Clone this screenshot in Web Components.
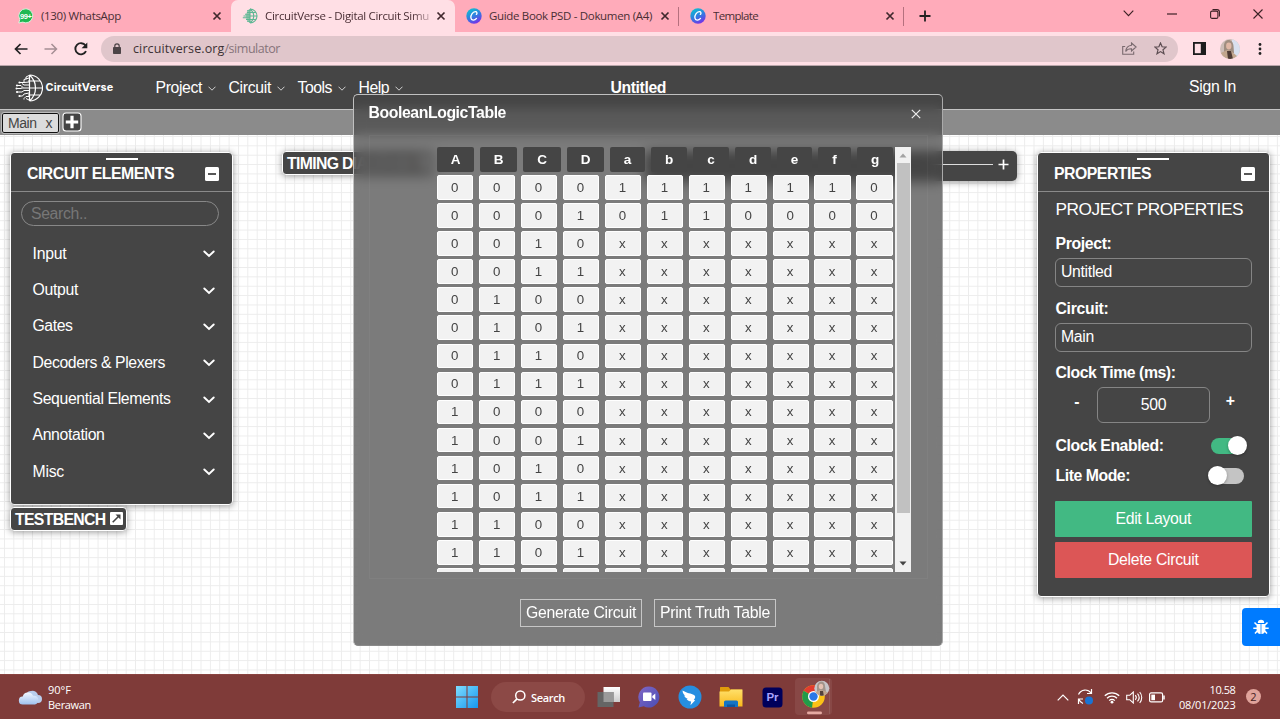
<!DOCTYPE html>
<html lang="en">
<head>
<meta charset="utf-8">
<title>CircuitVerse - Digital Circuit Simulator</title>
<style>
html,body{margin:0;height:719px;overflow:hidden;background:#fff}
body{font-family:"Liberation Sans",Arial,sans-serif;font-size:15.800px;color:#fff}
</style>
</head>
<body>
<cv-app></cv-app>
<script>
const icons = {
  close:[10,10,'<path d="M1.500 1.500l7 7M8.500 1.500l-7 7" stroke="#40282d" stroke-width="1.700"/>'],
  plus:[12,12,'<path d="M6 .5v11M.5 6h11" stroke="#222" stroke-width="1.800"/>'],
  whatsapp:[16,16,'<path d="M8 .8a7 7 0 1 1-3.3 13.3L.8 15l1-3.6A7 7 0 0 1 8 .8z" fill="#21b853" stroke="#e9fff0" stroke-width=".8"/><text x="8" y="10.6" font-size="7.5" font-family="Liberation Sans" font-weight="bold" fill="#fff" text-anchor="middle" textLength="12">99+</text>'],
  canva:[16,16,'<defs><linearGradient id="g" x1="0.2" y1="0" x2=".7" y2="1"><stop offset="0" stop-color="#0cc3cf"/><stop offset=".5" stop-color="#2f80e0"/><stop offset="1" stop-color="#7a2ce8"/></linearGradient></defs><circle cx="8" cy="8" r="7.7" fill="url(#g)"/><path d="M10.3 6.4c1.3-1 .7-2.9-1-2.7C6.600 4 4.500 7 4.900 9.800c.4 3 3.700 3 5.600.6" fill="none" stroke="#fff" stroke-width="1.3" stroke-linecap="round"/>'],
  globe:[16,16,'<g fill="none" stroke="#5db793" stroke-width="1.1"><path d="M8 1a7 7 0 0 1 0 14M8 1c5 4 5 10 0 14M8 1v14M5 4.500h9.300M1.500 8H15M4 11.500h10.300M3 6.200h5M.8 9.800H8M5 13.200h3M5 2.800h3" /></g><path d="M8 1C3.500 2 2 13 8 15z" fill="#5db793" opacity=".6"/>'],
  back:[14,12,'<path d="M13.500 6H1.500M6.500 1L1.500 6l5 5" fill="none" stroke="#222" stroke-width="1.700"/>'],
  fwd:[14,12,'<path d="M.5 6h12M7.500 1l5 5-5 5" fill="none" stroke="#a58f94" stroke-width="1.500"/>'],
  reload:[14,14,'<path d="M12 9.200A5.600 5.600 0 1 1 11.500 3.500" fill="none" stroke="#222" stroke-width="1.900"/><path d="M13.300.5v5.700H7.600z" fill="#222"/>'],
  lock:[8,11,'<rect y="4" width="8" height="7" rx=".8" fill="#4c4447"/><path d="M1.800 4.500V3a2.200 2.200 0 0 1 4.400 0v1.500" fill="none" stroke="#4c4447" stroke-width="1.200"/>'],
  share:[15,13,'<path d="M3.200 4.500H.7v7.800h11V9.500M9.500 1l4.600 4-4.600 4V6.800C6.500 6.700 5 7.500 3.700 9.500 4 6 6 3.600 9.500 3.200z" fill="none" stroke="#796a6f" stroke-width="1.100"/>'],
  star:[13,13,'<path d="M6.500 1l1.600 3.800 4 .3-3.100 2.700 1 4-3.500-2.200L3 11.800l1-4L.9 5.100l4-.3z" fill="none" stroke="#5c4d52" stroke-width="1.200"/>'],
  side:[13,13,'<rect x=".9" y=".9" width="11.200" height="11.200" fill="none" stroke="#1d1d1d" stroke-width="1.800"/><path d="M7.800 1H12v11H7.800z" fill="#1d1d1d"/>'],
  avatar:[20,20,'<defs><clipPath id="c"><circle cx="10" cy="10" r="10"/></clipPath></defs><g clip-path="url(#c)"><path d="M0 0h20v20H0z" fill="#cdbdb7"/><path d="M12 0h8v20h-8z" fill="#d9e0ee"/><path d="M4 14V7C4-1 13-1 13.500 7l.5 7z" fill="#a08e80"/><ellipse cx="8.800" cy="7" rx="2.700" ry="3.400" fill="#e0b8a5"/><path d="M1 14l6-3 4 1 6 5v5H2z" fill="#c2a68d"/><path d="M7 12h4l2 8H8z" fill="#4e3b34"/></g>'],
  dots:[4,12,'<g fill="#222"><circle cx="2" cy="1.500" r="1.400"/><circle cx="2" cy="6" r="1.400"/><circle cx="2" cy="10.500" r="1.400"/></g>'],
  wdown:[11,7,'<path d="M.7.7l4.800 5 4.800-5" fill="none" stroke="#3b2024" stroke-width="1.100"/>'],
  wmin:[10,2,'<path d="M0 1h10" stroke="#2a1518" stroke-width="1.100"/>'],
  wmax:[10,10,'<rect x=".6" y="2.100" width="7.300" height="7.300" rx="1.500" fill="none" stroke="#3b2024" stroke-width="1.100"/><path d="M2.500.6H7a2.400 2.400 0 0 1 2.400 2.400v4.500" fill="none" stroke="#3b2024" stroke-width="1.100"/>'],
  wclose:[10,10,'<path d="M.5.5l9 9M9.500.5l-9 9" stroke="#3b2024" stroke-width="1.100"/>'],
  logo:[28,28,'<g fill="none" stroke="#fff" stroke-width="1.200"><path d="M14.500 1v26M14.500 1a13 13 0 0 1 0 26M14.500 1c8 7 8 19 0 26M13 7h12M6 14h21.500M13 21h12"/><path d="M14 1.500L11 3v2.500M14 4l-5 1.500v3L14 8M5 8.500h4M14 11H9L7 9.500M2.500 11.500H6L8 13.500M1.500 14.500h5M14 16.500H9l-2 1.500H2M14 19l-5 1-1.500 2H4.500M14 22.500h-3L9 24.500v1M14 26l-3-1.500" stroke-width="1"/></g><g fill="#fff"><circle cx="4.500" cy="8.500" r="1.100"/><circle cx="2" cy="11.500" r="1.100"/><circle cx="1.500" cy="14.500" r="1"/><circle cx="2" cy="18" r="1.100"/><circle cx="4.500" cy="22" r="1.100"/></g>'],
  navchev:[8,5,'<path d="M.5.7L4 4.200 7.500.7" fill="none" stroke="#d0d0d0" stroke-width="1"/>'],
  chev:[12,8,'<path d="M1.300 1.500L6 6l4.700-4.500" fill="none" stroke="#fff" stroke-width="1.900" stroke-linecap="round"/>'],
  minus:[14,14,'<rect width="14" height="14" rx="1.500" fill="#fff"/><path d="M3 7h8" stroke="#444" stroke-width="1.800"/>'],
  addtab:[20,20,'<rect x="1" y="1" width="18" height="18" rx="3" fill="#444" stroke="#fff" stroke-width="1.100"/><path d="M10 3.800v12.400M3.800 10h12.400" stroke="#fff" stroke-width="3.200"/>'],
  ext:[13,13,'<rect width="13" height="13" rx="1" fill="#fff"/><path d="M2.700 10.300l6-6" stroke="#444" stroke-width="1.600"/><path d="M5.500 2.600h5v5z" fill="#444"/>'],
  dclose:[10,10,'<path d="M.8.8l8.400 8.400M9.200.8L.8 9.200" stroke="#eee" stroke-width="1.200"/>'],
  up:[8,5,'<path d="M4 .5l3.500 4h-7z" fill="#a3a3a3"/>'],
  down:[8,5,'<path d="M4 4.500L.5.500h7z" fill="#444"/>'],
  bug:[16,16,'<g fill="#fff"><path d="M4.800 4a3.200 3.200 0 0 1 6.400 0z"/><path d="M3.600 5h4v10C5 15 3.600 13 3.600 11zM8.400 5h4v6c0 2-1.400 4-4 4z"/></g><path d="M4 6L1.500 3.500M4 9.300H.3M4.200 12L2 14.500M12 6l2.500-2.500M12 9.300h3.700M11.800 12l2.200 2.500" stroke="#fff" stroke-width="1.500"/>'],
  cloud:[25,18,'<defs><linearGradient id="k" x2="0" y2="1"><stop offset="0" stop-color="#f2f7ff"/><stop offset="1" stop-color="#9fc0ee"/></linearGradient></defs><path d="M10 12a5 5 0 0 1 3-9 5.500 5.500 0 0 1 7 4 3.800 3.800 0 0 1 0 8z" fill="#b9cdec"/><path d="M5 16.500a4 4 0 0 1-.3-8A5.500 5.500 0 0 1 15 7.800a4.400 4.400 0 0 1 2 8.700z" fill="url(#k)"/>'],
  win:[22,22,'<defs><linearGradient id="w" x2="1" y2="1"><stop offset="0" stop-color="#7edcff"/><stop offset="1" stop-color="#1697ee"/></linearGradient></defs><path d="M0 0h10.500v10.500H0zM11.500 0H22v10.500H11.500zM0 11.500h10.500V22H0zM11.500 11.500H22V22H11.500z" fill="url(#w)"/>'],
  search:[14,14,'<circle cx="8.300" cy="5.500" r="4.600" fill="none" stroke="#fff" stroke-width="1.500"/><path d="M5 8.800L.9 13" stroke="#fff" stroke-width="1.700"/>'],
  task:[24,22,'<defs><linearGradient id="t" x2="0" y2="1"><stop offset="0" stop-color="#fff"/><stop offset="1" stop-color="#ccc"/></linearGradient></defs><rect x="6.500" y="1" width="16.500" height="15" fill="url(#t)"/><rect x=".5" y="6" width="16" height="15" fill="#656565"/><path d="M6.500 6h10v10h-10z" fill="#9a9a9a"/>'],
  chat:[22,22,'<defs><linearGradient id="h" x2="1" y2="1"><stop offset="0" stop-color="#8067c5"/><stop offset="1" stop-color="#4a4db5"/></linearGradient></defs><path d="M11 .5A10.500 10.500 0 1 1 5.800 20.200L.5 21.500l1.300-5.200A10.500 10.500 0 0 1 11 .5z" fill="url(#h)"/><rect x="5" y="6.500" width="8.500" height="8.500" rx="1" fill="#fff"/><path d="M14.300 10l3-2.500v6.600l-3-2.500z" fill="#fff"/>'],
  bird:[24,24,'<circle cx="12" cy="12" r="11.500" fill="#268ee0"/><path d="M4.500 5.500c4 2.500 9 3 11.500 4.500 2 1.300 1.300 3-.2 5l1.400.3-4.700 5 .6-3.800c-2-.2-3.500-1-4.500-2.500l1.300-.1c-2-.8-3.300-2-3.800-3.500l1.300.1C5.500 9.500 4.700 8 4.500 5.500z" fill="#fff"/>'],
  folder:[24,22,'<defs><linearGradient id="f" x2="0" y2="1"><stop offset="0" stop-color="#ffe06a"/><stop offset="1" stop-color="#f9b91c"/></linearGradient></defs><path d="M1.500 1h8l2 2.500H23V9H1V1.500z" fill="#e09c0b"/><path d="M.5 5.500H10L12 3.500h11.500V20.500H.5z" fill="url(#f)"/><path d="M5 21v-5a1.500 1.500 0 0 1 1.500-1.500h11A1.500 1.500 0 0 1 19 16v5z" fill="#1474c4"/><path d="M8 21v-2.500h8V21z" fill="#0c56a0"/>'],
  pr:[21,21,'<rect x=".5" y=".5" width="20" height="20" rx="3.500" fill="#00005b"/><text x="10.500" y="14.300" font-family="Liberation Sans" font-size="11.500" font-weight="bold" fill="#a9a4ff" text-anchor="middle">Pr</text>'],
  chrome:[38,38,'<defs><clipPath id="q"><circle cx="26.800" cy="10.300" r="7.500"/></clipPath></defs><rect width="37" height="37" rx="4" fill="#fff" opacity=".07"/><path d="M34.500 1v35" stroke="#fff" opacity=".1"/><circle cx="18.500" cy="18.500" r="11.300" fill="#fbc116"/><path d="M18.500 18.500L8.700 12.800A11.300 11.300 0 0 1 28.300 12.900z" fill="#e33b2e"/><path d="M18.500 18.500L8.700 12.800A11.300 11.300 0 0 0 17 29.700z" fill="#229b4a"/><circle cx="18.500" cy="18.500" r="5.500" fill="#fff"/><circle cx="18.500" cy="18.500" r="4.200" fill="#2a78e8"/><g clip-path="url(#q)"><path d="M19 2h16v17H19z" fill="#c7c5c8"/><path d="M22 14V8c1-6 8-6 8 0l1 6z" fill="#a3948a"/><ellipse cx="26" cy="8.500" rx="2.200" ry="2.800" fill="#e5c2b3"/><path d="M19 15l6-3 5 1 5 3v4H19z" fill="#bfa691"/><path d="M25 13h3l1 6h-4z" fill="#54423b"/></g><rect x="12" y="33.500" width="15" height="2.800" rx="1.400" fill="#e6a9a2"/>'],
  tup:[12,7,'<path d="M.7 6.300L6 1l5.300 5.300" fill="none" stroke="#fff" stroke-width="1.200"/>'],
  sync:[18,18,'<path d="M1.500 6.500C4 .8 11 .8 14 5M14.500 1v4.500H10M6 15.500A7 7 0 0 1 2 11.500M1.500 16v-5H6" fill="none" stroke="#fff" stroke-width="1.200"/><circle cx="12" cy="12.500" r="4" fill="#1a74d4"/>'],
  wifi:[16,13,'<g fill="none" stroke="#fff" stroke-width="1.300"><path d="M.8 4.800a10.200 10.200 0 0 1 14.400 0M3 7.300a7 7 0 0 1 10 0M5.200 9.600a4 4 0 0 1 5.600 0"/></g><circle cx="8" cy="11.200" r="1.400" fill="#fff"/>'],
  vol:[17,13,'<path d="M.7 4.300h3L7.300 1v11L3.700 8.700h-3z" fill="none" stroke="#fff" stroke-width="1.100"/><path d="M9.300 4.200a3.500 3.500 0 0 1 0 4.600M11.500 2.600a6 6 0 0 1 0 7.800M13.700 1a8.500 8.500 0 0 1 0 11" fill="none" stroke="#fff" stroke-width="1.100"/>'],
  bat:[16,11,'<rect x=".6" y=".9" width="13" height="9" rx="1.500" fill="none" stroke="#fff" stroke-width="1.200"/><path d="M2.300 2.600H6v5.600H2.300z" fill="#fff"/><path d="M15 3.500v4" stroke="#fff" stroke-width="1.500"/>']
};

/* Base class: fills an open shadow root from view() when the element is connected. */
class View extends HTMLElement {
  connectedCallback(){
    if(this.shadowRoot) return;
    this.attachShadow({mode:'open'}).innerHTML = '<style>*{box-sizing:border-box}</style>' + this.view();
    this.ready();
  }
  ready(){}
  a(n){return this.getAttribute(n) || ''}
}

customElements.define('cv-icon', class extends View {
  view(){
    const [w,h,body] = icons[this.a('name')];
    return `<style>:host{display:block;flex:none;width:${w}px;height:${h}px}svg{display:block}</style><svg width="${w}" height="${h}" viewBox="0 0 ${w} ${h}">${body}</svg>`;
  }
});

/* Single-line label; spreads its letters to the width given in "w". */
customElements.define('cv-label', class extends View {
  view(){return `<style>:host{display:block;flex:none;white-space:nowrap;width:${this.a('w')}px}span{display:inline-block}</style><span><slot></slot></span>`}
  ready(){
    const s = this.shadowRoot.querySelector('span'), n = this.textContent.length;
    s.style.letterSpacing = ((+this.a('w') - s.getBoundingClientRect().width) / n).toFixed(3) + 'px';
  }
});

customElements.define('browser-tab', class extends View {
  view(){return `<style>:host{display:flex;align-items:center;height:32px;width:var(--w);flex:none;padding:0 9px 0 11px}
    :host([active]){background:#ffdfe5;border-radius:7px 7px 0 0}
    .t{margin-left:7px;flex:1;overflow:hidden}
    :host([active]) .t{-webkit-mask:linear-gradient(90deg,#000 86%,transparent)}
    :host([sep]){background:linear-gradient(#b5707e,#b5707e) right 7px / 1px 19px no-repeat}
  </style><cv-icon name="${this.a('icon')}"></cv-icon><div class="t"><slot></slot></div><cv-icon name="close"></cv-icon>`}
});

customElements.define('browser-chrome', class extends View {
  view(){return `<style>
    :host{display:block;font:11.500px "Open Sans","Noto Sans",sans-serif;color:#4a2e34;background:#ffdfe5}
    .tabs{display:flex;height:32px;background:#ffabba;padding-left:7px}
    .tabs cv-label{margin-top:-1px}
    .ctl{margin-left:auto;display:flex;align-items:center;height:27px;padding-right:17px}
    .bar{display:flex;align-items:center;height:34px;padding:0 18px 0 14px;border-bottom:1px solid #b9a5aa}
    .url{display:flex;align-items:center;margin-left:13px;width:1077px;height:26px;border-radius:13px;background:#e0c6cb;padding:0 11px 0 12px;font-size:12.500px;color:#3d3235}
  </style>
  <div class="tabs">
    <browser-tab icon="whatsapp" style="--w:224px"><cv-label w="80">(130) WhatsApp</cv-label></browser-tab>
    <browser-tab icon="globe" active style="--w:224px"><cv-label w="164">CircuitVerse - Digital Circuit Simu</cv-label></browser-tab>
    <browser-tab icon="canva" sep style="--w:224px"><cv-label w="163">Guide Book PSD - Dokumen (A4)</cv-label></browser-tab>
    <browser-tab icon="canva" sep style="--w:224.500px"><cv-label w="45">Template</cv-label></browser-tab>
    <cv-icon name="plus" style="margin:10px 0 0 15px"></cv-icon>
    <div class="ctl"><cv-icon name="wdown"></cv-icon><cv-icon name="wmin" style="margin-left:33px"></cv-icon><cv-icon name="wmax" style="margin-left:33px"></cv-icon><cv-icon name="wclose" style="margin-left:33px"></cv-icon></div>
  </div>
  <div class="bar">
    <cv-icon name="back"></cv-icon><cv-icon name="fwd" style="margin-left:16px"></cv-icon><cv-icon name="reload" style="margin-left:16px"></cv-icon>
    <div class="url"><cv-icon name="lock"></cv-icon><cv-label w="91.500" style="margin-left:12px">circuitverse.org</cv-label><cv-label w="55.500" style="color:#86747a">/simulator</cv-label>
      <cv-icon name="share" style="margin-left:auto"></cv-icon><cv-icon name="star" style="margin-left:17px"></cv-icon></div>
    <cv-icon name="side" style="margin-left:15px"></cv-icon><cv-icon name="avatar" style="margin-left:14px"></cv-icon><cv-icon name="dots" style="margin-left:18px"></cv-icon>
  </div>`}
});

customElements.define('nav-item', class extends View {
  view(){return `<style>:host{display:flex;align-items:center;gap:5.500px}cv-icon{margin-top:2px}</style><slot></slot><cv-icon name="navchev"></cv-icon>`}
});

customElements.define('cv-navbar', class extends View {
  view(){return `<style>
    :host{display:block}
    nav{display:flex;align-items:center;height:43px;background:#454545;padding:0 44px 0 15px}
    .brand{font:bold 10.800px "Inter","Liberation Sans",sans-serif}
    .tabs{display:flex;align-items:center;height:26px;background:#8b8b8b;border-top:1px solid #c4c4c4;padding-left:2px}
    .tab{display:flex;align-items:center;width:57px;height:20px;background:#dcdcdc;border:1px solid #111;border-radius:2px;padding-left:5px;color:#444;font-size:14px;outline:1px solid #bbb}
  </style>
  <nav><cv-icon name="logo"></cv-icon><cv-label class="brand" w="68" style="margin-left:2.500px">CircuitVerse</cv-label>
    <nav-item style="margin-left:42px"><cv-label w="46.500">Project</cv-label></nav-item>
    <nav-item style="margin-left:13px"><cv-label w="42.500">Circuit</cv-label></nav-item>
    <nav-item style="margin-left:13px"><cv-label w="34.500">Tools</cv-label></nav-item>
    <nav-item style="margin-left:13px"><cv-label w="30.500">Help</cv-label></nav-item>
    <cv-label w="55.500" style="font-weight:bold;margin-left:208px">Untitled</cv-label>
    <cv-label w="47" style="margin-left:auto;margin-top:-2px">Sign In</cv-label></nav>
  <div class="tabs"><div class="tab"><cv-label w="28.500">Main</cv-label><cv-label w="8" style="margin-left:9px">x</cv-label></div><cv-icon name="addtab" style="margin:-1px 0 0 3px"></cv-icon></div>`}
});

customElements.define('cv-panel', class extends View {
  view(){return `<style>
    :host{display:block;box-sizing:border-box;background:#454545;border:1.500px solid #fff;border-radius:4px;box-shadow:0 1px 7px rgba(0,0,0,.42)}
    header{display:flex;flex-direction:column;align-items:center;height:39px;border-bottom:1px solid #8a8a8a;padding-top:5px}
    .grip{width:32px;height:2px;background:#fff}
    .row{display:flex;align-items:center;justify-content:space-between;width:100%;padding:5px 13.500px 0 16px;font-weight:bold}
    cv-icon{margin-top:1px}
  </style><header><div class="grip"></div><div class="row"><cv-label w="${this.a('tw')}">${this.a('heading')}</cv-label><cv-icon name="minus"></cv-icon></div></header><slot></slot>`}
});

customElements.define('circuit-elements', class extends View {
  view(){
    const items = [['Input',34],['Output',45.5],['Gates',40],['Decoders &amp; Plexers',132.5],['Sequential Elements',138],['Annotation',72],['Misc',31.5]];
    return `<style>:host{display:block}
    cv-panel{height:353px}
    .s{display:flex;align-items:center;margin:9px 13px 0 9.500px;height:25px;border:1px solid #888;border-radius:13px;padding:1px 0 0 9.500px;color:#777}
    ul{list-style:none;margin:10.200px 0 0;padding:0 17.500px 0 21.500px}
    li{display:flex;align-items:center;justify-content:space-between;height:36.300px}
    li cv-icon{margin-top:1px}
    </style><cv-panel heading="CIRCUIT ELEMENTS" tw="147"><div class="s"><cv-label w="56">Search..</cv-label></div>
    <ul>${items.map(([t,w])=>`<li><cv-label w="${w}">${t}</cv-label><cv-icon name="chev"></cv-icon></li>`).join('')}</ul></cv-panel>`;
  }
});

customElements.define('cv-chip', class extends View {
  view(){return `<style>:host{display:flex;align-items:center;box-sizing:border-box;background:#454545;border:1.500px solid #fff;border-radius:4px;box-shadow:0 1px 7px rgba(0,0,0,.42);padding:1px 0 0 4px;height:24px;font-weight:bold;gap:4.500px}::slotted(cv-icon){margin-top:-2px}</style><slot></slot>`}
});

customElements.define('cv-toggle', class extends View {
  view(){return `<style>:host{display:flex;align-items:center;width:33px;height:16px;border-radius:8px;background:#c4c4c4}
    i{width:19px;height:19px;flex:none;border-radius:50%;background:#fff;margin-left:-3px;box-shadow:0 1px 3px rgba(0,0,0,.3)}
    :host([on]){background:#42b983}:host([on]) i{margin-left:17px}</style><i></i>`}
});

customElements.define('circuit-properties', class extends View {
  view(){return `<style>:host{display:block}
    cv-panel{height:445px}
    .b{padding:7px 17px 0 17.500px;display:flex;flex-direction:column}
    b{display:block;height:18px;line-height:18px}
    .h{height:20px;line-height:20px;font-size:17.300px}
    .in{height:28.500px;border:1px solid #858585;border-radius:6px;padding:0 0 1px 5px;display:flex;align-items:center;margin-top:5.500px;margin-left:-.5px}
    .clk{display:grid;grid-template-columns:42px 113px 1fr;text-align:center;font-weight:bold;margin:5px 0 0 -.5px;height:36px}
    .clk span{padding-top:6px}
    .clk .n{border:1px solid #858585;border-radius:6px;font-weight:normal;display:flex;align-items:center;justify-content:center}
    .t{display:flex;align-items:center;justify-content:space-between;height:30px}
    .btn{height:35.500px;border-radius:1px;display:flex;align-items:center;justify-content:center;margin-left:-.5px}
    </style><cv-panel heading="PROPERTIES" tw="97"><div class="b">
    <div class="h"><cv-label w="187.500">PROJECT PROPERTIES</cv-label></div>
    <b style="margin-top:16px"><cv-label w="56">Project:</cv-label></b><div class="in"><cv-label w="51">Untitled</cv-label></div>
    <b style="margin-top:13px"><cv-label w="53">Circuit:</cv-label></b><div class="in"><cv-label w="33">Main</cv-label></div>
    <b style="margin-top:12.500px"><cv-label w="120">Clock Time (ms):</cv-label></b>
    <div class="clk"><span style="padding-left:2px">-</span><div class="n"><cv-label w="25.500">500</cv-label></div><span style="padding:5px 1px 0 0">+</span></div>
    <div class="t" style="margin-top:7.500px"><b><cv-label w="108">Clock Enabled:</cv-label></b><cv-toggle on style="margin-right:8px"></cv-toggle></div>
    <div class="t"><b><cv-label w="74.500">Lite Mode:</cv-label></b><cv-toggle style="margin-right:8px"></cv-toggle></div>
    <div class="btn" style="background:#42b983;margin-top:10.500px"><cv-label w="75.500">Edit Layout</cv-label></div>
    <div class="btn" style="background:#dc5656;margin-top:5.500px"><cv-label w="90.500">Delete Circuit</cv-label></div>
    </div></cv-panel>`}
});

customElements.define('truth-table', class extends View {
  view(){
    const outs = ['1111110','0110000'];
    let rows = '';
    for(let i=0;i<15;i++){
      const r = i.toString(2).padStart(4,'0') + (outs[i] || 'xxxxxxx');
      rows += `<div class="r">${[...r].map(c=>`<span>${i<14?c:''}</span>`).join('')}</div>`;
    }
    return `<style>:host{display:flex;width:474px;height:425px;overflow:hidden;font-size:13.300px;color:#444}
    .v{width:458px;overflow:hidden}
    .h{display:grid;grid-template-columns:43px 43px 44px 43px 41px 42px 42px 42px 41px 39px 36px;height:24.500px;color:#fff;font-weight:bold;font-size:13.500px}
    .h span{background:#454545;border-radius:2px;margin-right:6px;display:flex;align-items:center;justify-content:center}
    .h span:last-child{margin-right:0}
    .r{display:grid;grid-template-columns:repeat(11,36.400px);column-gap:5.560px;height:24.500px;margin-top:3.580px}
    .r span{background:#f2f2f2;border:1px solid #fff;border-radius:2px;display:flex;align-items:center;justify-content:center;padding-right:1px}
    .sb{width:16px;background:#f1f1f1;display:flex;flex-direction:column;align-items:center;justify-content:space-between;padding:6px 0}
    .th{width:13px;height:350px;background:#c1c1c1;margin:5px 0 auto}
    </style><div class="v"><div class="h">${[...'ABCDabcdefg'].map(c=>`<span>${c}</span>`).join('')}</div>${rows}</div>
    <div class="sb"><cv-icon name="up"></cv-icon><div class="th"></div><cv-icon name="down"></cv-icon></div>`;
  }
});

customElements.define('logic-dialog', class extends View {
  view(){return `<style>:host{display:flex;flex-direction:column;box-sizing:border-box;width:590px;height:552px;background:rgba(68,68,68,.7);backdrop-filter:blur(6px);border:1px solid #c8c8c8;border-color:#c0c0c0 #aaa #8a8a8a #c0c0c0;border-radius:5px;padding:0 14.500px}
    header{display:flex;align-items:center;justify-content:space-between;height:35px;padding-right:7px;font-weight:bold}
    .c{margin-top:5px;height:444px;padding:11px 0 0 67.500px;border:1px solid rgba(255,255,255,.035)}
    .f{display:flex;gap:12px;justify-content:center;margin-top:20px}
    .f div{width:122px;height:28px;border:1px solid #c6c6c6;display:flex;align-items:center;justify-content:center}
    </style><header><cv-label w="137.500">BooleanLogicTable</cv-label><cv-icon name="dclose" style="margin-top:2px"></cv-icon></header>
    <div class="c"><truth-table></truth-table></div>
    <div class="f"><div><cv-label w="110">Generate Circuit</cv-label></div><div><cv-label w="110">Print Truth Table</cv-label></div></div>`}
});

customElements.define('win-taskbar', class extends View {
  view(){return `<style>:host{display:flex;align-items:center;box-sizing:border-box;height:45px;background:#7f3b39;padding:0 19px 0 18px;font:11px "Open Sans","Noto Sans",sans-serif;color:#fff;border-top:1px solid #8a4441}
    .w{margin-left:5px;line-height:15px}
    .s{display:flex;align-items:center;width:94px;height:30px;border-radius:15px;background:#8c4946;margin-left:13px;padding-left:21px;gap:5px;font-weight:600}
    .r{margin-left:auto;display:flex;align-items:center}
    .d{line-height:15px;display:flex;flex-direction:column;align-items:flex-end;margin-left:14px}
    .n{width:15px;height:15px;border-radius:50%;background:#e0a39b;color:#43201f;text-align:center;line-height:15px;margin:-2px 0 0 10.500px}
    </style><cv-icon name="cloud"></cv-icon><div class="w"><cv-label w="23">90°F</cv-label><cv-label w="43">Berawan</cv-label></div>
    <cv-icon name="win" style="margin-left:365px"></cv-icon><div class="s"><cv-icon name="search"></cv-icon><cv-label w="34">Search</cv-label></div>
    <cv-icon name="task" style="margin-left:12px"></cv-icon><cv-icon name="chat" style="margin-left:17px"></cv-icon><cv-icon name="bird" style="margin-left:18px"></cv-icon><cv-icon name="folder" style="margin-left:17px"></cv-icon><cv-icon name="pr" style="margin-left:19px"></cv-icon><cv-icon name="chrome" style="margin-left:12px"></cv-icon>
    <div class="r"><cv-icon name="tup"></cv-icon><cv-icon name="sync" style="margin-left:8px"></cv-icon><cv-icon name="wifi" style="margin-left:9px"></cv-icon><cv-icon name="vol" style="margin-left:6px"></cv-icon><cv-icon name="bat" style="margin-left:6px"></cv-icon>
    <div class="d"><cv-label w="26">10.58</cv-label><cv-label w="56.500">08/01/2023</cv-label></div><div class="n">2</div></div>`}
});

/* The simulator canvas: free-floating windows over a grid. */
customElements.define('cv-workspace', class extends View {
  view(){return `<style>:host{display:block;position:relative;flex:1;background:linear-gradient(90deg,#ececec 1px,transparent 1px) 4px 0/9.370px 9.370px,linear-gradient(#ececec 1px,transparent 1px) 0 1px/9.370px 9.370px,#fff}
    .f{position:absolute}
    .tool{background:#454545;border-radius:5px;box-shadow:0 1px 7px rgba(0,0,0,.42);width:372px;height:30px;display:flex;align-items:center;justify-content:flex-end;gap:5px;padding:0 8px 4px 0}
    .tool i{width:64px;height:1px;background:#ddd}
    .bug{width:38.500px;height:38.500px;background:#007bff;border-radius:4px 0 0 4px;display:flex;align-items:center;justify-content:center}
    </style>
    <circuit-elements class="f" style="left:10px;top:16.500px;width:223px"></circuit-elements>
    <cv-chip class="f" style="left:10px;top:372px;width:117px"><cv-label w="90.500">TESTBENCH</cv-label><cv-icon name="ext"></cv-icon></cv-chip>
    <cv-chip class="f" style="left:282px;top:16px;width:152px"><cv-label w="126">TIMING DIAGRAM</cv-label><cv-icon name="ext"></cv-icon></cv-chip>
    <div class="f tool" style="left:645px;top:16px"><i></i><svg width="11" height="11"><path d="M5.500.5v10M.5 5.500h10" stroke="#fff" stroke-width="1.700"/></svg></div>
    <circuit-properties class="f" style="left:1037px;top:16.500px;width:232.500px"></circuit-properties>
    <div class="f bug" style="right:0;top:472.500px"><cv-icon name="bug"></cv-icon></div>`}
});

customElements.define('cv-app', class extends View {
  view(){return `<style>:host{display:flex;flex-direction:column;width:1280px;height:719px;position:relative;overflow:hidden}
    logic-dialog{position:absolute;left:353px;top:94px}
    </style><browser-chrome></browser-chrome><cv-navbar></cv-navbar><cv-workspace></cv-workspace><win-taskbar></win-taskbar><logic-dialog></logic-dialog>`}
});
</script>
</body>
</html>
